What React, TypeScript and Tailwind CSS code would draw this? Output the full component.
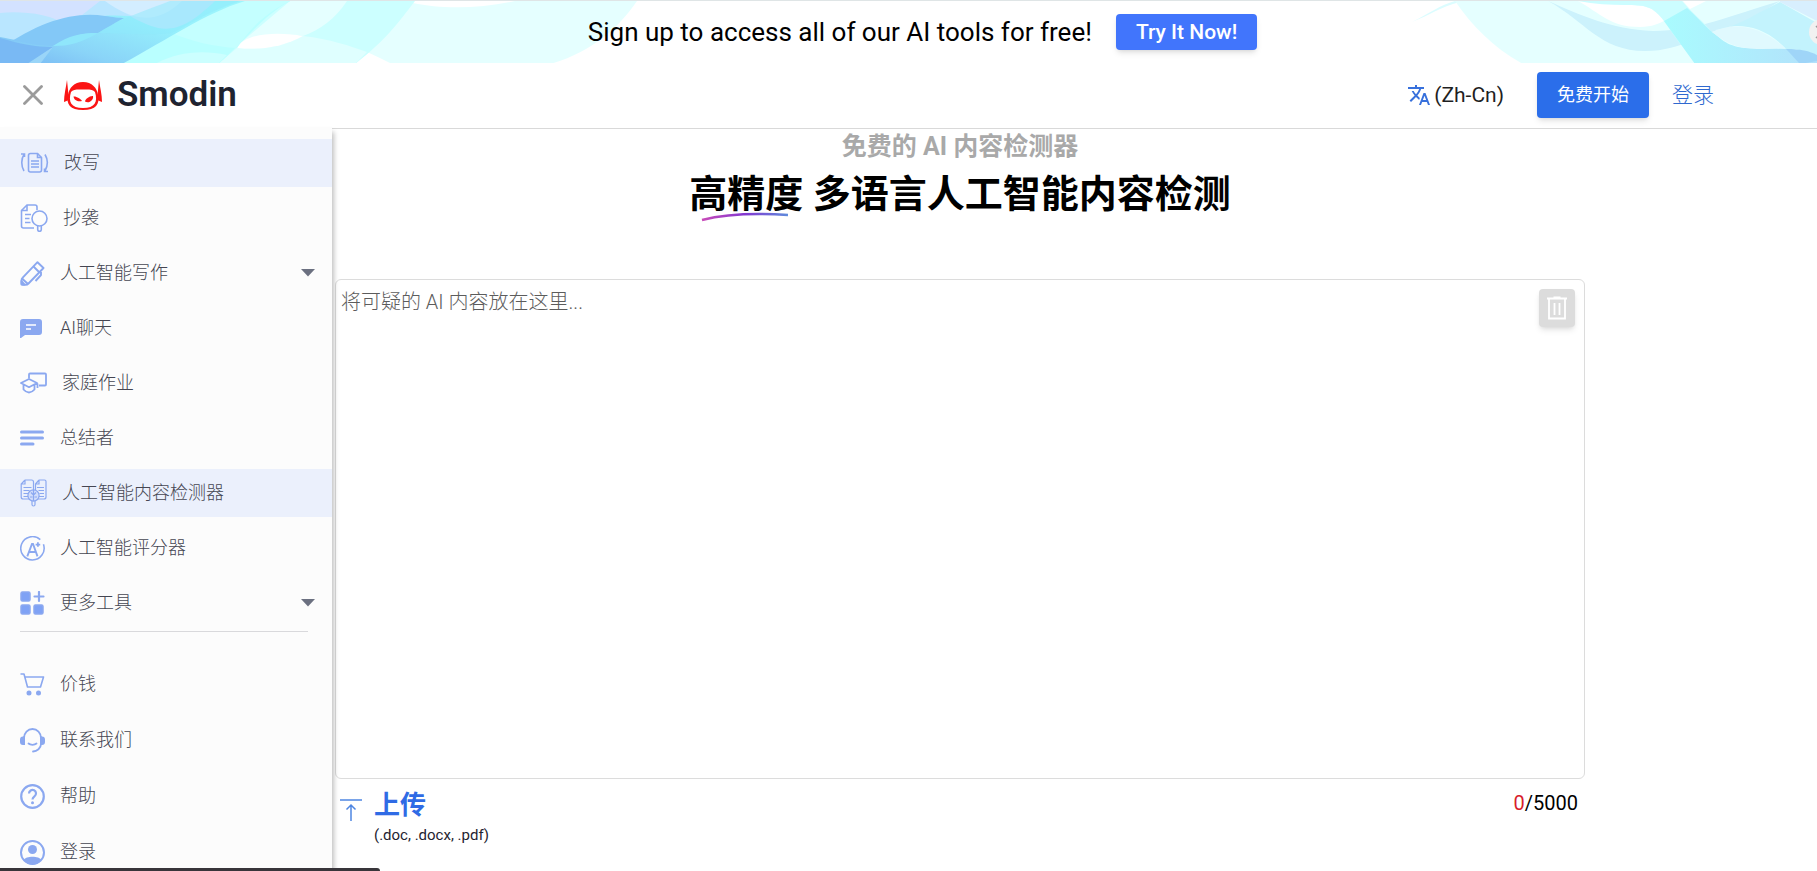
import { useState } from 'react'
import type { ReactNode } from 'react'

interface NavItem {
  label: string
  icon: ReactNode
  active?: boolean
  expandable?: boolean
}

const MAX_CHARS = 5000

const RewriteIcon = () => (
  <svg width="29" height="22" viewBox="0 0 28 22" fill="none" stroke="currentColor" strokeWidth="1.6">
    <path d="M10 1.5h7l4 4V18a2 2 0 0 1-2 2h-9a2 2 0 0 1-2-2V3.500a2 2 0 0 1 2-2Z" />
    <path d="M17 1.500V5.500h4M10.500 9h8M10.500 12h8M10.500 15h8" />
    <path d="M3.500 2.500C.5 7 .5 14 3.500 19M.5 2h3.500v3" />
    <path d="M24.500 2.500c3 5 3 11 0 16.500M27.500 19.500H24v-3" />
  </svg>
)

const PlagiarismIcon = () => (
  <svg width="28" height="28" viewBox="0 0 28 28" fill="none" stroke="currentColor" strokeWidth="1.6">
    <path d="M17 6V3a2 2 0 0 0-2-2H7L1.500 6.500V22a2 2 0 0 0 2 2H14" />
    <path d="M7 1v5.500H1.500M5 10.500h6M5 14.500h4.500M5 18.500h5.500" />
    <circle cx="19.500" cy="14.500" r="7.500" />
    <path d="M17.700 22v3.500a1.800 1.800 0 0 0 3.600 0V22" />
  </svg>
)

const PencilIcon = () => (
  <svg width="25" height="25" viewBox="0 0 24 25" fill="none" stroke="currentColor" strokeWidth="1.900" strokeLinejoin="round">
    <path d="M17 1.200l6 5.800L8 22.500a4 4 0 0 1-3 1.300H2.500A1.500 1.500 0 0 1 1 22.300V19.500a4 4 0 0 1 1.200-2.800Z" />
    <path d="M13 5.500l6 6M1.500 17.500l6 5.500M20.500 11v3l-5.500 6" />
    <path d="M1 20l3 3.500H1Z" fill="currentColor" />
  </svg>
)

const ChatIcon = () => (
  <svg width="25" height="24" viewBox="0 0 25 24">
    <path d="M3 3h16a3 3 0 0 1 3 3v10a3 3 0 0 1-3 3H5l-4 3H0V6a3 3 0 0 1 3-3Z" fill="currentColor" />
    <path d="M6 9h10M6 13h5" stroke="#fff" strokeWidth="1.700" />
  </svg>
)

const HomeworkIcon = () => (
  <svg width="27" height="22" viewBox="0 0 27 22" fill="none" stroke="currentColor" strokeWidth="1.800" strokeLinejoin="round">
    <path d="M9 6.500V2.500a1 1 0 0 1 1-1h15a1 1 0 0 1 1 1v10a1 1 0 0 1-1 1h-6" />
    <path d="M9 7l-8 4 8 4.200 8-4.200ZM3.500 13v4.500c3.500 4 7.500 4 11 0V13M17.500 11.500V16" />
  </svg>
)

const SummaryIcon = () => (
  <svg width="25" height="24" viewBox="0 0 25 24" stroke="currentColor" strokeWidth="3" strokeLinecap="round">
    <path d="M1.500 6h21M1.500 12h21M1.500 18H13" />
  </svg>
)

const DetectorIcon = () => (
  <svg width="27" height="28" viewBox="0 0 26 28" fill="none" stroke="currentColor" strokeWidth="1.200">
    <path d="M4.500 1H11a2 2 0 0 1 2 2v9M4.500 1L.7 5v13a2 2 0 0 0 2 2h6M4.500 1v4H.7" />
    <path d="M18.500 1H24a1.500 1.500 0 0 1 1.500 1.500V18a2 2 0 0 1-2 2h-6M18.500 1L15 5v6M18.500 1v4H15" />
    <path d="M3 8.500h8M3 11.500h6M3 14.500h5M3 17.500h5M16.500 8.500h7M18 11.500h5.500M19 14.500h4.500M18.500 17.500h5" />
    <circle cx="13" cy="16.500" r="5.600" fill="#d3defb" />
    <path d="M13 11v11M10.500 13.500l2 2M15.500 13.500l-2 2M9.500 18h2.500M14 18h2.500" />
    <path d="M11.500 22v3.500a1.500 1.500 0 0 0 3 0V22" />
  </svg>
)

const GraderIcon = () => (
  <svg width="25" height="25" viewBox="0 0 24 24" fill="none" stroke="currentColor" strokeWidth="1.500">
    <path d="M19.500 3.500A11.200 11.200 0 1 0 22.500 8" />
    <path d="M7 19.500l4.500-12h1l4.300 12M8.800 15.300h6.500" strokeWidth="1.800" />
    <path d="M17.200 6v4.400M15 8.200h4.400" strokeWidth="1.700" />
  </svg>
)

const MoreToolsIcon = () => (
  <svg width="25" height="24" viewBox="0 0 25 24" fill="#7fa2f5" stroke="currentColor" strokeWidth="1.500">
    <rect x="1" y="1" width="9" height="9" rx="1.500" />
    <rect x="1" y="14" width="9" height="9" rx="1.500" />
    <rect x="14" y="14" width="9" height="9" rx="1.500" />
    <path d="M19 1v9M14.500 5.500h9" strokeWidth="2.200" strokeLinecap="round" />
  </svg>
)

const CartIcon = () => (
  <svg width="25" height="24" viewBox="0 0 25 24" fill="none" stroke="currentColor" strokeWidth="1.600" strokeLinejoin="round">
    <path d="M.5 2H4l3.500 13h13L23.500 5H5" />
    <circle cx="9" cy="21" r="1.700" fill="currentColor" />
    <circle cx="18.500" cy="21" r="1.700" fill="currentColor" />
  </svg>
)

const ContactIcon = () => (
  <svg width="25" height="25" viewBox="0 0 25 25" fill="none" stroke="currentColor" strokeWidth="1.800" strokeLinecap="round">
    <path d="M4 10a8.500 9 0 0 1 17 0v6c0 4-4 7.500-8 7.500" />
    <path d="M8.500 15.500c2 1.700 6 1.700 8 0" />
    <path d="M5 7.500v9.500H3a3 3 0 0 1-3-3v-2.500a3 3 0 0 1 3-3ZM20 7.500v9.500H22a3 3 0 0 0 3-3v-2.500a3 3 0 0 0-3-3Z" fill="currentColor" stroke="none" />
  </svg>
)

const HelpIcon = () => (
  <svg width="25" height="25" viewBox="0 0 25 25" fill="none" stroke="currentColor" strokeWidth="2.200">
    <circle cx="12.500" cy="12.500" r="11.300" />
    <path d="M9 9.500a3.500 3.500 0 1 1 5.500 2.800c-1.300 1-2 1.500-2 3.200" />
    <circle cx="12.500" cy="18.700" r="1.500" fill="currentColor" stroke="none" />
  </svg>
)

const AccountIcon = () => (
  <svg width="25" height="25" viewBox="0 0 25 25">
    <circle cx="12.500" cy="12.500" r="11.500" fill="none" stroke="currentColor" strokeWidth="2" />
    <circle cx="12.500" cy="9.500" r="4.500" fill="currentColor" />
    <path d="M3.500 20C6 15.500 19 15.500 21.500 20C17 26 8 26 3.500 20Z" fill="currentColor" />
  </svg>
)

const tools: NavItem[] = [
  { label: '改写', icon: <RewriteIcon />, active: true },
  { label: '抄袭', icon: <PlagiarismIcon /> },
  { label: '人工智能写作', icon: <PencilIcon />, expandable: true },
  { label: 'AI聊天', icon: <ChatIcon /> },
  { label: '家庭作业', icon: <HomeworkIcon /> },
  { label: '总结者', icon: <SummaryIcon /> },
  { label: '人工智能内容检测器', icon: <DetectorIcon />, active: true },
  { label: '人工智能评分器', icon: <GraderIcon /> },
  { label: '更多工具', icon: <MoreToolsIcon />, expandable: true },
]

const links: NavItem[] = [
  { label: '价钱', icon: <CartIcon /> },
  { label: '联系我们', icon: <ContactIcon /> },
  { label: '帮助', icon: <HelpIcon /> },
  { label: '登录', icon: <AccountIcon /> },
]

function NavLink({ item }: { item: NavItem }) {
  return (
    <a
      href="#"
      className={`flex h-12 items-center gap-[15px] pl-5 pr-4 text-lg font-light text-[#454652] ${item.active ? 'bg-[#ebf0fc]' : ''}`}
    >
      <span className="shrink-0 text-[#8ba8f0]">{item.icon}</span>
      <span className="flex-1">{item.label}</span>
      {item.expandable && (
        <svg width="16" height="8" viewBox="0 0 16 8" fill="#6b7080">
          <path d="M1 0h14L8 7.500Z" />
        </svg>
      )}
    </a>
  )
}

function BannerWaves() {
  return (
    <div className="absolute inset-0 flex justify-between">
      <svg width="660" height="62" viewBox="0 0 660 62" className="shrink-0">
        <defs>
          <linearGradient id="deep" x1="0" y1="1" x2="1" y2="0.200">
            <stop offset="0" stopColor="#76b4f3" />
            <stop offset="0.300" stopColor="#8ad4f8" />
            <stop offset="0.700" stopColor="#96f0fc" />
            <stop offset="1" stopColor="#9df5fd" />
          </linearGradient>
        </defs>
        <path d="M0 0H637C618 28 590 52 550 63H392C384 59 376 55 367 51L355 63H0Z" fill="#e5ffff" />
        <path d="M413 2C440 8 480 8 515 0H413Z" fill="#fff" />
        <path d="M0 0H415C398 22 385 40 355 63H0Z" fill="#ccffff" />
        <path d="M290 0H347C335 18 320 29 303 35C280 31 260 32 237 45Z" fill="#e5ffff" />
        <path d="M237 47C265 50 285 44 303 35C330 38 350 45 367 51L355 63H218Z" fill="#dfffff" />
        <path d="M237 47C245 31 280 31 303 35C285 45 262 50 237 47Z" fill="#fff" />
        <path d="M0 0H290C262 15 240 45 218 63H0Z" fill="#b9ffff" />
        <path d="M290 0C265 12 250 28 237 47C215 46 190 40 172 32C200 15 215 5 232 0Z" fill="#c4ffff" />
        <path d="M218 63L227 54C200 48 175 52 155 63Z" fill="#ccffff" />
        <path d="M0 0H245C205 12 165 40 122 63H0Z" fill="url(#deep)" />
        <path d="M0 0H215C190 24 160 34 130 15C95 12 50 20 20 40C12 38 5 37 0 36Z" fill="#b9e6ff" />
        <path d="M0 0H100L68 25C50 12 20 10 0 12Z" fill="#d3e2ff" />
        <path d="M105 0H215C190 24 175 30 158 27C145 24 130 15 105 0Z" fill="#c2e6ff" />
        <path d="M105 0H182C155 26 130 18 105 0Z" fill="#d3edff" />
        <path d="M0 48C40 20 75 10 105 15C112 16 120 17 124 17C115 22 108 26 98 32C80 32 70 36 53 45C35 45 20 40 15 40Z" fill="#83c8f7" />
        <path d="M53 45C70 34 80 32 98 32C80 42 70 45 53 45Z" fill="#8fe6fb" />
        <path d="M98 32C125 15 150 8 170 0H240C210 10 195 20 172 32C145 35 120 32 98 32Z" fill="#8eeafb" opacity="0.500" />
        <path d="M0 37C20 43 35 46 53 46L27 63H0Z" fill="#79b9f4" />
        <path d="M27 63L53 46L40 63Z" fill="#9ad5f8" />
      </svg>
      <svg width="407" height="62" viewBox="0 0 407 62" className="shrink-0">
        <defs>
          <linearGradient id="aqua" x1="0" y1="0" x2="1" y2="0">
            <stop offset="0" stopColor="#a9fbfe" />
            <stop offset="1" stopColor="#b3e1fb" />
          </linearGradient>
        </defs>
        <path d="M2 21C20 12 30 4 45 0L50 1C30 6 20 14 2 21Z" fill="#dcfdff" />
        <path d="M45 0H407V63H113C85 48 62 25 45 0Z" fill="#e5ffff" />
        <path d="M168 0C190 12 200 26 230 26C242 26 250 22 254 20C243 5 235 4 215 4L180 0Z" fill="#fff" />
        <path d="M138 0C175 20 190 50 235 50C275 50 290 30 325 25C345 20 355 8 370 0C320 15 285 30 243 30C200 28 170 14 138 0Z" fill="#ccf2fc" />
        <path d="M168 0H272C280 10 295 22 302 31C285 36 278 40 270 43L254 20C243 5 235 4 215 4C200 4 185 3 168 0Z" fill="#ccfdff" />
        <path d="M254 20L277 7C286 15 295 25 302 31C310 36 315 45 335 47C370 48 385 46 407 55V63H285Z" fill="url(#aqua)" />
        <path d="M302 31C330 25 350 10 370 1L407 22V54C395 49 385 48 376 48C350 20 320 22 302 31Z" fill="#c3f3fd" />
        <path d="M370 0H407V20L370 1Z" fill="#d8effe" />
        <path d="M273 0H296L280 8Z" fill="#fff" />
        <path d="M302 31C322 21 350 24 375 47C360 48 345 49 330 46C318 43 310 37 302 31Z" fill="#e0f9fe" />
        <path d="M376 48C390 48 400 50 407 54V60L390 63C385 58 380 52 376 48Z" fill="#9fd5f8" />
        <circle cx="412" cy="31" r="13" fill="#f1f1f1" />
        <path d="M406 25l4 4M406 37l4-4" stroke="#999" strokeWidth="1.500" />
      </svg>
    </div>
  )
}

function Logo() {
  return (
    <svg width="38" height="30" viewBox="0 0 38 30">
      <path d="M3 0L5 20L0 22C0 15 2 7 3 0ZM35 0L33 20L38 22C38 15 36 7 35 0Z" fill="#fb1414" />
      <path d="M19 2C28 2 33 8 34 15C36 24 32 30 19 30C6 30 2 24 4 15C5 8 10 2 19 2Z" fill="#fb1414" />
      <path d="M19 9.500C24 9.500 29 9 31 12C34 22 31 28 19 28C7 28 4 22 7 12C9 9 14 9.500 19 9.500Z" fill="#fff" />
      <path d="M9.500 16.500C12 16 17 19 18 21C14 22 10 20.500 9.500 16.500ZM21 21.500C21 19 26 15.500 29 16C30 20 25 24 21 21.500Z" fill="#fb1414" />
    </svg>
  )
}

export default function App() {
  const [text, setText] = useState('')

  return (
    <div className="relative flex h-screen flex-col overflow-hidden bg-white font-['Roboto','Noto_Sans_CJK_SC',sans-serif] text-black">
      {/* Promo banner */}
      <div className="relative flex h-[63px] shrink-0 items-center justify-center border-t border-[#dfe5e6] pl-7">
        <BannerWaves />
        <div className="relative flex items-center gap-6">
          <p className="text-[26px] leading-8">Sign up to access all of our AI tools for free!</p>
          <button className="h-9 rounded bg-[#4175fc] px-5 text-[21px] leading-7 font-medium text-white shadow-md">Try It Now!</button>
        </div>
      </div>

      {/* Header */}
      <header className="flex h-[66px] shrink-0 items-center border-b border-[#d9d9d9] pb-0.5 pl-[23px]">
        <button aria-label="关闭菜单" className="mr-[21px]">
          <svg width="20" height="20" viewBox="0 0 20 20" stroke="#9b9b9b" strokeWidth="2.800" strokeLinecap="round">
            <path d="M1.500 1.500l17 17M18.500 1.500l-17 17" />
          </svg>
        </button>
        <a href="#" className="flex items-center gap-[15px]">
          <Logo />
          <span className="text-[35px] leading-10 font-semibold text-[#1e2330]">Smodin</span>
        </a>
        <div className="ml-auto mr-[103px] flex items-center">
          <button className="mr-[33px] flex items-center gap-[3px] text-[21px] leading-8 text-[#1f1f1f]">
            <svg width="24" height="24" viewBox="0 0 24 24" fill="#3770dc">
              <path d="M12.870 15.070l-2.540-2.510.03-.03c1.740-1.940 2.980-4.170 3.710-6.530H17V4h-7V2H8v2H1v1.990h11.170C11.500 7.920 10.440 9.750 9 11.350 8.070 10.320 7.300 9.190 6.690 8h-2c.73 1.630 1.730 3.170 2.980 4.560l-5.090 5.020L4 19l5-5 3.110 3.110.76-2.040zM18.500 10h-2L12 22h2l1.120-3h4.750L21 22h2l-4.500-12zm-2.620 7l1.620-4.330L19.120 17h-3.240z" />
            </svg>
            (Zh-Cn)
          </button>
          <button className="mr-[23px] h-[46px] rounded bg-[#2b6eea] px-5 text-lg text-white shadow-md">免费开始</button>
          <a href="#" className="text-[21px] leading-8 font-light text-[#2f69cf]">登录</a>
        </div>
      </header>

      <div className="flex min-h-0 flex-1">
        {/* Sidebar */}
        <nav className="z-10 -mt-0.5 w-[332px] shrink-0 overflow-hidden bg-[#fcfcfc] pt-3 shadow-[2px_5px_5px_rgba(0,0,0,0.25)]">
          <div className="flex flex-col gap-[7px]">
            {tools.map((item) => (
              <NavLink key={item.label} item={item} />
            ))}
          </div>
          <hr className="mb-7 ml-5 mr-6 mt-1 border-[#d9d9dc]" />
          <div className="flex flex-col gap-2">
            {links.map((item) => (
              <NavLink key={item.label} item={item} />
            ))}
          </div>
        </nav>

        {/* Detector */}
        <main className="flex min-w-0 flex-1 flex-col pl-[3px]">
          <div className="w-full max-w-[1250px] shrink-0">
            <div className="text-center">
              <p className="text-[25px] leading-9 font-bold text-[#a9a9a9]">免费的 AI 内容检测器</p>
              <h1 className="text-[38px] leading-[58px] font-bold">
                <span className="relative">
                  高精度
                  <svg width="88" height="10" viewBox="0 0 88 10" fill="none" className="absolute -bottom-1.5 left-3">
                    <defs>
                      <linearGradient id="stroke" x1="0" x2="1">
                        <stop offset="0" stopColor="#c94bb8" />
                        <stop offset="0.500" stopColor="#8338d0" />
                        <stop offset="1" stopColor="#5e8bdc" />
                      </linearGradient>
                    </defs>
                    <path d="M1 8C25 2 55 1 87 3" stroke="url(#stroke)" strokeWidth="2.500" />
                  </svg>
                </span>{' '}
                多语言人工智能内容检测
              </h1>
            </div>

            <div className="relative mt-14">
              <textarea
                aria-label="AI 内容"
                value={text}
                maxLength={MAX_CHARS}
                onChange={(e) => setText(e.target.value)}
                placeholder="将可疑的 AI 内容放在这里..."
                className="block h-[500px] w-full resize-none rounded-md border border-[#dcdcdc] px-[5px] py-1.5 text-xl leading-8 font-light placeholder:text-[#5c5c5c]"
              />
              <button
                aria-label="清除"
                onClick={() => setText('')}
                className="absolute right-2.5 top-2.5 flex h-[38px] w-9 items-center justify-center rounded bg-[#dcdcdc] shadow-md"
              >
                <svg width="20" height="24" viewBox="0 0 20 24" fill="none" stroke="#fff" strokeWidth="1.800">
                  <path d="M0 2.500h20M6.500 1.300h7M2 3v19.500h16V3M7.500 7v12M12.500 7v12" />
                </svg>
              </button>
            </div>

            <div className="flex items-start justify-between pl-[5px] pr-[7px] pt-2">
              <button className="flex items-start gap-3 text-left">
                <svg width="22" height="22" viewBox="0 0 22 22" fill="none" stroke="#4f86e2" strokeWidth="1.500" className="mt-3">
                  <path d="M0 1h22M11 22V6M6.500 10.500L11 6l4.500 4.500" />
                </svg>
                <span>
                  <span className="block text-[26px] leading-9 font-bold text-[#2f6be5]">上传</span>
                  <span className="block text-[15px] leading-6 text-[#1f2330]">(.doc, .docx, .pdf)</span>
                </span>
              </button>
              <p className="text-xl leading-8">
                <span className="text-[#d81e2c]">{text.length}</span>/{MAX_CHARS}
              </p>
            </div>
          </div>
        </main>
      </div>

      <div className="absolute bottom-0 left-0 z-20 h-[3px] w-[380px] rounded-tr bg-[#38353a]" />
    </div>
  )
}
